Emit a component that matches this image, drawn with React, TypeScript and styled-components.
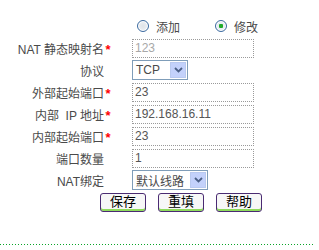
import React from "react";
import styled, { createGlobalStyle } from "styled-components";

const GlobalStyle = createGlobalStyle`
  html, body {
    margin: 0;
    padding: 0;
    background: #ffffff;
  }
  body {
    font-family: "Liberation Sans", "Noto Sans CJK SC", sans-serif;
    font-size: 12px;
    color: #4a4a4a;
  }
`;

const Page = styled.div`
  width: 319px;
  height: 250px;
  overflow: hidden;
`;

const Form = styled.form`
  width: 315px;
  padding-top: 15px;
  padding-bottom: 31px;
`;

const Divider = styled.div`
  width: 315px;
  height: 1px;
  background-image: repeating-linear-gradient(
    to right,
    #0aa52a 0 1px,
    transparent 1px 3px
  );
`;

const Row = styled.div`
  display: grid;
  grid-template-columns: 112px 1fr;
  column-gap: 20px;
  height: 22px;
  align-items: center;
`;

const Label = styled.div`
  text-align: right;
  white-space: pre;
  font-size: 12px;
  color: #4a4a4a;
`;

const Star = styled.span<{ $show: boolean }>`
  display: inline-block;
  width: 8px;
  text-align: center;
  color: #ff0000;
  font-weight: bold;
  font-size: 13px;
  visibility: ${(p) => (p.$show ? "visible" : "hidden")};
`;

const Field = styled.div`
  display: flex;
  align-items: center;
`;

const Input = styled.input<{ $muted?: boolean }>`
  box-sizing: border-box;
  width: 122px;
  height: 19px;
  border: 1px dotted #9a9a9a;
  padding: 0 2px;
  font-family: "Liberation Sans", "Noto Sans CJK SC", sans-serif;
  font-size: 12px;
  color: ${(p) => (p.$muted ? "#a8a8a8" : "#555555")};
  background: #ffffff;
  outline: none;
`;

const SelectBox = styled.div<{ $width: number }>`
  box-sizing: border-box;
  width: ${(p) => p.$width}px;
  height: 20px;
  border: 1px solid #7f9db9;
  display: flex;
  align-items: center;
  justify-content: space-between;
  padding: 0 1px 0 3px;
  background: #ffffff;
`;

const SelectText = styled.span`
  font-size: 12px;
  color: #4a4a4a;
  white-space: nowrap;
`;

const Arrow = styled.span`
  box-sizing: border-box;
  width: 16px;
  height: 16px;
  display: flex;
  align-items: center;
  justify-content: center;
  border: 1px solid #b9c9ef;
  background-color: #c3d1fb;
  background-image: radial-gradient(#dfe7ff 0.6px, transparent 0.7px);
  background-size: 2px 2px;
`;

const RadioGroup = styled.div`
  display: flex;
  align-items: center;
  padding-left: 5px;
  gap: 35px;
`;

const RadioItem = styled.label`
  display: flex;
  align-items: center;
  gap: 7px;
  color: #4a4a4a;
  font-size: 12px;
`;

const RadioDot = styled.span<{ $checked: boolean }>`
  box-sizing: border-box;
  width: 12px;
  height: 12px;
  border-radius: 50%;
  border: 1px solid #3b6aa0;
  background: radial-gradient(
    circle,
    ${(p) => (p.$checked ? "#1faa2a 0 2px, #e8eef3 2.5px" : "#dfe3e8 0, #f4f6f8 100%")}
  );
  box-shadow: inset 0 0 0 1px #ffffff;
`;

const Buttons = styled.div`
  display: flex;
  gap: 12px;
  padding-left: 100px;
  height: 22px;
  align-items: center;
`;

const Button = styled.button`
  box-sizing: border-box;
  width: 46px;
  height: 19px;
  padding: 0 0 2px;
  border: 1px solid #4a2b72;
  border-radius: 3px;
  background-color: #f7f7f7;
  background-image: radial-gradient(#e2e2e2 0.6px, transparent 0.7px);
  background-size: 2px 2px;
  box-shadow: inset 0 -2px 0 #8fdb5c;
  font-family: "Liberation Sans", "Noto Sans CJK SC", sans-serif;
  font-size: 13px;
  line-height: 15px;
  color: #000000;
  cursor: pointer;
`;

const Chevron = () => (
  <svg width="9" height="6" viewBox="0 0 9 6">
    <path d="M1 1 L4.5 4.5 L8 1" fill="none" stroke="#4b5f86" strokeWidth="1.8" />
  </svg>
);

const Select = ({ value, width }: { value: string; width: number }) => (
  <SelectBox $width={width}>
    <SelectText>{value}</SelectText>
    <Arrow>
      <Chevron />
    </Arrow>
  </SelectBox>
);

interface IRowProps {
  label: string;
  required?: boolean;
  children: React.ReactNode;
}

const FormRow = ({ label, required = false, children }: IRowProps) => (
  <Row>
    <Label>
      {label}
      <Star $show={required}>*</Star>
    </Label>
    <Field>{children}</Field>
  </Row>
);

const App = () => {
  return (
    <Page>
      <GlobalStyle />
      <Form onSubmit={(e) => e.preventDefault()}>
        <Row>
          <div />
          <RadioGroup>
            <RadioItem>
              <RadioDot $checked={false} />
              添加
            </RadioItem>
            <RadioItem>
              <RadioDot $checked={true} />
              修改
            </RadioItem>
          </RadioGroup>
        </Row>
        <FormRow label="NAT 静态映射名" required>
          <Input $muted readOnly defaultValue="123" />
        </FormRow>
        <FormRow label="协议">
          <Select value="TCP" width={56} />
        </FormRow>
        <FormRow label="外部起始端口" required>
          <Input defaultValue="23" />
        </FormRow>
        <FormRow label="内部  IP 地址" required>
          <Input defaultValue="192.168.16.11" />
        </FormRow>
        <FormRow label="内部起始端口" required>
          <Input defaultValue="23" />
        </FormRow>
        <FormRow label="端口数量">
          <Input defaultValue="1" />
        </FormRow>
        <FormRow label="NAT绑定">
          <Select value="默认线路" width={76} />
        </FormRow>
        <Buttons>
          <Button type="submit">保存</Button>
          <Button type="reset">重填</Button>
          <Button type="button">帮助</Button>
        </Buttons>
      </Form>
      <Divider />
    </Page>
  );
};

export default App;
